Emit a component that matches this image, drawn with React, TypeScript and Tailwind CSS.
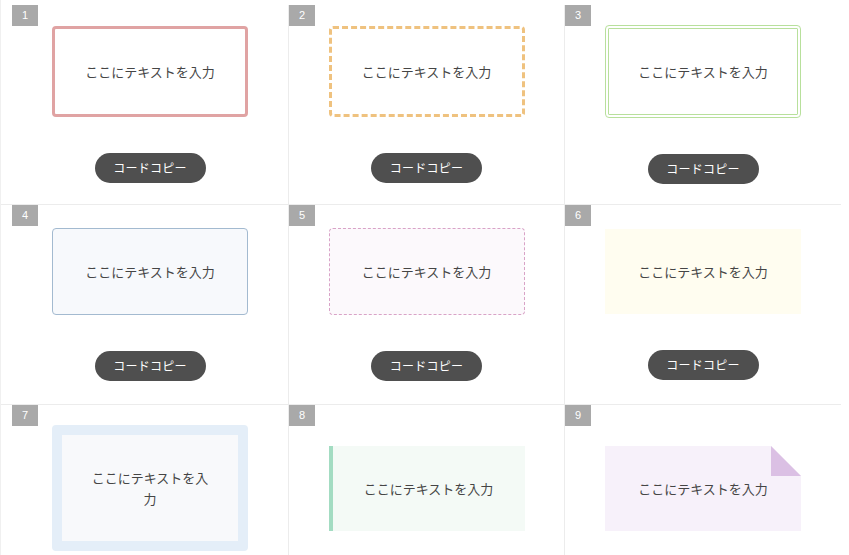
import React from "react";

const TEXT = "ここにテキストを入力";

function Label({ n }: { n: number }) {
  return (
    <div className="absolute left-0 top-0 flex h-[21px] w-[26px] items-center justify-center bg-[#a9a9a9] font-['Liberation_Sans',sans-serif] text-[11px] text-white">
      {n}
    </div>
  );
}

function CopyButton() {
  return (
    <button className="mt-[36px] flex h-[30px] w-[111px] items-center justify-center rounded-full bg-[#4f4f4f] text-[12px] tracking-[0.02em] text-white">
      コードコピー
    </button>
  );
}

const boxText = "text-center text-[13px] leading-[21px] text-[#454545]";

function Box({ n }: { n: number }) {
  switch (n) {
    case 1:
      return (
        <div className={`w-[196px] rounded-[4px] border-[3px] border-[#e0a3a3] bg-white py-8 ${boxText}`}>
          {TEXT}
        </div>
      );
    case 2:
      return (
        <div className={`w-[196px] rounded-[4px] border-[3px] border-dashed border-[#efc27f] bg-white py-8 ${boxText}`}>
          {TEXT}
        </div>
      );
    case 3:
      return (
        <div className={`w-[196px] rounded-[4px] border-[4px] border-double border-[#b8e09c] bg-white py-8 ${boxText}`}>
          {TEXT}
        </div>
      );
    case 4:
      return (
        <div className={`w-[196px] rounded-[4px] border border-[#a3bad0] bg-[#f7f9fc] py-8 ${boxText}`}>
          {TEXT}
        </div>
      );
    case 5:
      return (
        <div className={`w-[196px] rounded-[4px] border border-dashed border-[#d9a3c7] bg-[#fcf9fc] py-8 ${boxText}`}>
          {TEXT}
        </div>
      );
    case 6:
      return (
        <div className={`w-[196px] bg-[#fffdf0] py-8 ${boxText}`}>{TEXT}</div>
      );
    case 7:
      return (
        <div className={`w-[196px] rounded-[4px] border-[10px] border-[#e4eef8] bg-[#f8f9fb] px-[25px] py-8 ${boxText}`}>
          {TEXT}
        </div>
      );
    case 8:
      return (
        <div className={`w-[196px] border-l-4 border-[#a3dcc2] bg-[#f4faf6] py-8 ${boxText}`}>
          {TEXT}
        </div>
      );
    default:
      return (
        <div className={`relative w-[196px] bg-[#f7f1fa] py-8 ${boxText}`}>
          {TEXT}
          <svg
            className="absolute right-0 top-0"
            width="30"
            height="30"
            viewBox="0 0 30 30"
          >
            <polygon points="0,0 30,0 30,30" fill="#ffffff" />
            <polygon points="0,0 0,30 30,30" fill="#dbc0e4" />
          </svg>
        </div>
      );
  }
}

function Cell({ n, col }: { n: number; col: number }) {
  const width = col === 0 ? "w-[277px]" : "w-[276px]";
  const border = col === 2 ? "" : "border-r border-[#ececec]";
  return (
    <div
      className={`relative flex min-h-[199px] flex-col items-center justify-center py-5 ${width} ${border}`}
    >
      <Label n={n} />
      <Box n={n} />
      <CopyButton />
    </div>
  );
}

export default function App() {
  const rows = [
    [1, 2, 3],
    [4, 5, 6],
    [7, 8, 9],
  ];
  return (
    <div className="h-[555px] w-[849px] overflow-hidden bg-white font-['Noto_Sans_CJK_JP','Liberation_Sans',sans-serif]">
      <div className="w-[841px] border-l border-[#f0f0f0] pt-[5px]">
        {rows.map((row, i) => (
          <div key={i} className="flex border-b border-[#ececec] pl-[11px]">
            {row.map((n, j) => (
              <Cell key={n} n={n} col={j} />
            ))}
          </div>
        ))}
      </div>
    </div>
  );
}
